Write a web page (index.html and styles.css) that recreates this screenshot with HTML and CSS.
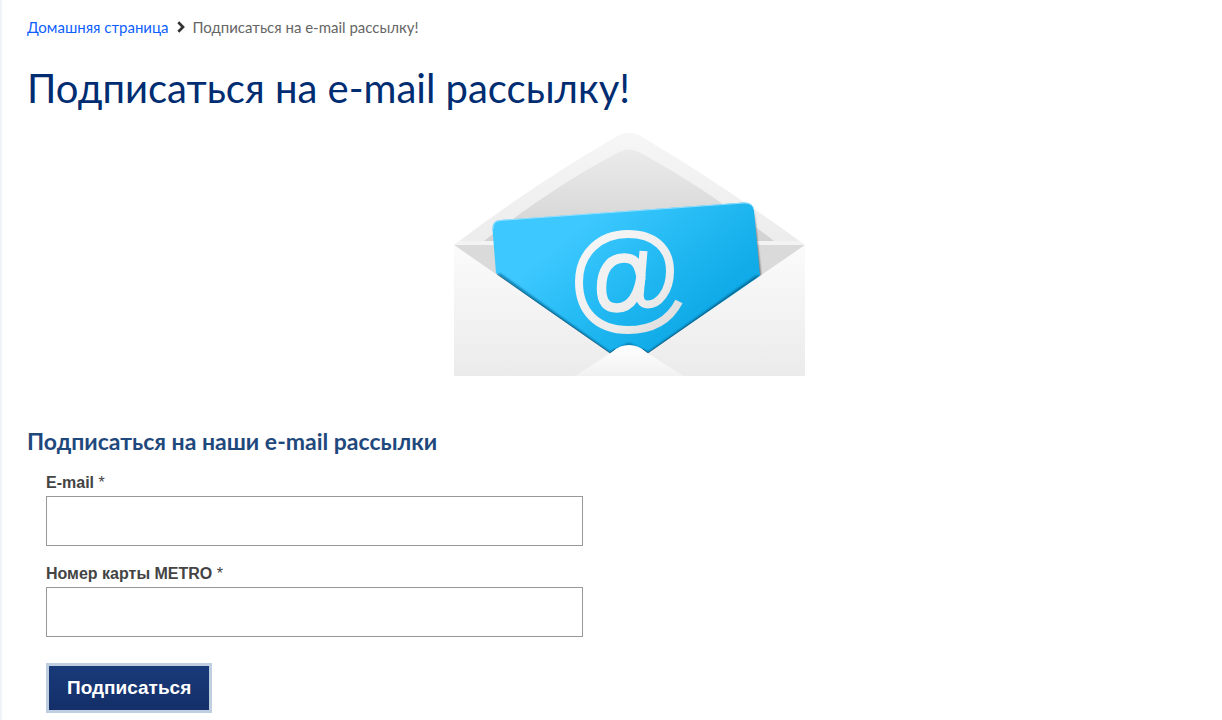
FILE: index.html
```html
<!DOCTYPE html>
<html lang="ru">
<head>
<meta charset="utf-8">
<title>Подписаться на e-mail рассылку!</title>
<link rel="stylesheet" href="styles.css">
</head>
<body>
<main class="page">
  <nav class="breadcrumb">
    <a class="breadcrumb-link" href="#">Домашняя страница</a>
    <svg class="breadcrumb-arrow" viewBox="0 0 8 12" aria-hidden="true"><path d="M1.3 1.3 6 6 1.3 10.7" fill="none" stroke="#333" stroke-width="2.7"/></svg>
    <span>Подписаться на e-mail рассылку!</span>
  </nav>
  <h1 class="title">Подписаться на e-mail рассылку!</h1>
  <div class="hero">
    <svg class="envelope" viewBox="454 130 351 246" role="img" aria-label="E-mail">
      <defs>
        <linearGradient id="inside" x1="0" y1="0" x2="0" y2="1"><stop offset="0" stop-color="#ebebeb"/><stop offset="1" stop-color="#d2d2d2"/></linearGradient>
        <linearGradient id="flap" x1="0" y1="0" x2="0" y2="1"><stop offset="0" stop-color="#f6f6f6"/><stop offset="1" stop-color="#ececec"/></linearGradient>
        <linearGradient id="card" gradientUnits="userSpaceOnUse" x1="570" y1="235" x2="660" y2="345"><stop offset="0" stop-color="#3dc8ff"/><stop offset="0.5" stop-color="#24baf3"/><stop offset="1" stop-color="#10abe8"/></linearGradient>
        <linearGradient id="front" x1="0" y1="0" x2="0" y2="1"><stop offset="0" stop-color="#fbfbfb"/><stop offset="1" stop-color="#ebebeb"/></linearGradient>
        <linearGradient id="bottom" x1="0" y1="0" x2="0" y2="1"><stop offset="0" stop-color="#ffffff"/><stop offset="1" stop-color="#f1f1f1"/></linearGradient>
        <linearGradient id="sign" gradientUnits="userSpaceOnUse" x1="590" y1="235" x2="675" y2="325"><stop offset="0" stop-color="#f6f6f6"/><stop offset="0.7" stop-color="#ececec"/><stop offset="1" stop-color="#dcdcdc"/></linearGradient>
        <filter id="soft" x="-10%" y="-10%" width="120%" height="120%"><feGaussianBlur stdDeviation="1"/></filter>
      </defs>
      <path d="M454 245Q536 183 614 138Q629 128 644 138Q723 185 805 245Z" fill="url(#flap)"/>
      <path d="M484 241Q548 190 617 153Q629 146 641 153Q708 190 774 241Z" fill="url(#inside)"/>
      <path d="M459 241H799L805 245H454Z" fill="#f3f3f3"/>
      <path d="M454 245H805L755 282H503Z" fill="#dadada"/>
      <path d="M754 212 761 276 751 282Z" fill="#666" filter="url(#soft)"/>
      <path d="M492.500 229Q492 221 500 220L744 202.500Q753 202 754 210L760 276 648 356H610L496 273Z" fill="url(#card)"/>
      <path d="M493 229Q493 221 500 220.500L744 203Q753 203 754 210" fill="none" stroke="#a7e5ff" stroke-width="0.8"/>
      <path d="M499 274 610 353 629 344 648 353 757 276" fill="none" stroke="#066a98" stroke-width="2" filter="url(#soft)"/>
      <path d="M454 245 610 353 629 362 648 353 805 245V376H454Z" fill="url(#front)"/>
      <path d="M575 376Q596 363 613 351Q620 345 629 345Q638 345 645 351Q662 363 684 376Z" fill="url(#bottom)"/>
      <path d="M497 274 610 353 615 349M643 349 648 353 759 275" fill="none" stroke="#155475" stroke-opacity="0.8" stroke-width="0.8"/>
      <g fill="none" stroke="url(#sign)">
        <path d="M679 301.500C669 321 651 330 628 330C597 330 579 311 579 282C579 253 600 234 628 234C655 234 670 249 670 271C670 292 658 304.500 648 304.500C641 304.500 639 299 640 292L643.500 251" stroke-width="8"/>
        <path d="M641 277C639 292 632 308 617 308C606 308 601.500 301 601.500 288C601.500 271 609 258 624 258C635 258 639 264 641 277" stroke-width="9.500"/>
      </g>
    </svg>
  </div>
  <h2 class="subtitle">Подписаться на наши e-mail рассылки</h2>
  <form class="form">
    <div class="field">
      <label class="label" for="email">E-mail <span class="required">*</span></label>
      <input class="input" id="email" type="email">
    </div>
    <div class="field">
      <label class="label" for="card-number">Номер карты METRO <span class="required">*</span></label>
      <input class="input" id="card-number" type="text">
    </div>
    <button class="submit" type="submit">Подписаться</button>
  </form>
</main>
</body>
</html>
```
FILE: styles.css
```css
* { box-sizing: border-box; }
body {
  margin: 0;
  background: #fff;
  font-family: Lato, sans-serif;
}
.page {
  min-height: 100vh;
  padding: 17px 0 7px 25px;
  border-left: 2px solid #f0f4f9;
}
.breadcrumb {
  display: flex;
  align-items: center;
  gap: 8px;
  font-size: 15px;
  line-height: 20px;
  color: #666;
}
.breadcrumb-link { color: #0f5fff; text-decoration: none; }
.breadcrumb-arrow { width: 8px; height: 12px; }
.title {
  margin: 26px 0 0;
  font-size: 40px;
  line-height: 50px;
  font-weight: 400;
  color: #002d72;
}
.hero {
  display: flex;
  justify-content: center;
  margin-top: 17px;
  padding-left: 9px;
}
.envelope { width: 351px; height: 246px; }
.subtitle {
  margin: 51px 0 0;
  font-size: 23px;
  line-height: 28px;
  font-weight: 700;
  color: #1f497d;
}
.form {
  margin: 18px 19px 0;
  font-family: "Liberation Sans", Arial, sans-serif;
}
.field {
  display: flex;
  flex-direction: column;
  gap: 3px;
  max-width: 537px;
  margin-bottom: 18px;
}
.label {
  font-size: 16px;
  line-height: 20px;
  font-weight: 700;
  color: #444;
}
.required { font-weight: 400; }
.input {
  width: 100%;
  height: 50px;
  padding: 0 12px;
  border: 1px solid #999;
  border-radius: 0;
  background: #fff;
  font: inherit;
}
.submit {
  margin-top: 8px;
  height: 50px;
  padding: 0 18px;
  border: 3px solid #bfcfdf;
  background: linear-gradient(#183a79, #142f69);
  color: #fff;
  font-family: inherit;
  font-size: 19px;
  font-weight: 700;
}
```
